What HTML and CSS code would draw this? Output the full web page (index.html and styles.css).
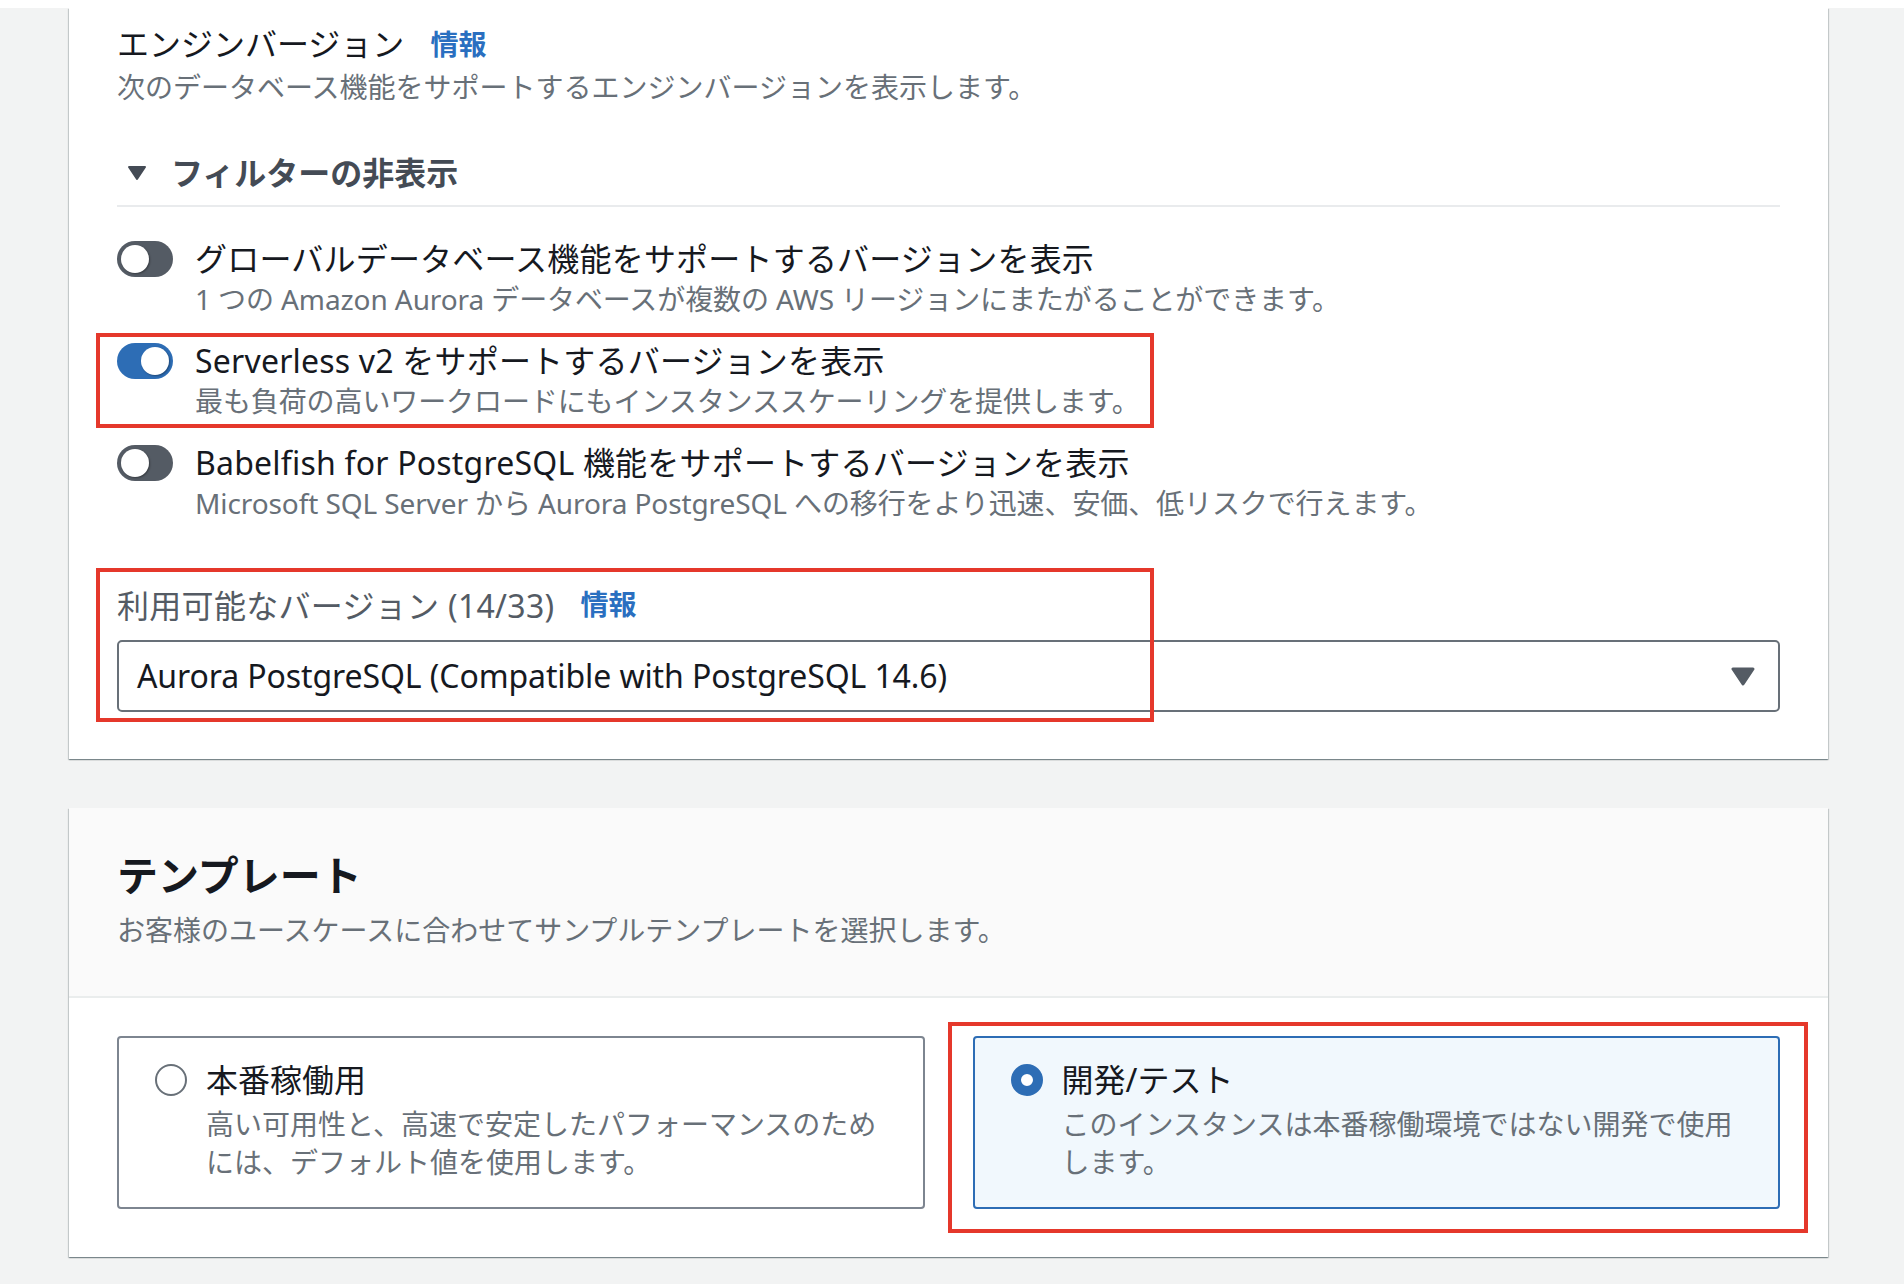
FILE: index.html
```html
<!DOCTYPE html>
<html lang="ja">
<head>
<meta charset="utf-8">
<title>エンジンバージョン</title>
<link rel="stylesheet" href="styles.css">
</head>
<body>
<div class="page">
  <section class="card card-engine">
    <div class="field-head">
      <span class="title">エンジンバージョン</span>
      <a class="info">情報</a>
    </div>
    <p class="desc">次のデータベース機能をサポートするエンジンバージョンを表示します。</p>

    <div class="expander">
      <svg class="caret" width="20" height="16" viewBox="0 0 20 16"><polygon points="2,2 18,2 10,14" fill="#444b55" stroke="#444b55" stroke-width="2" stroke-linejoin="round"/></svg>
      <span>フィルターの非表示</span>
    </div>
    <div class="divider"></div>

    <div class="toggles">
      <div class="toggle-row">
        <span class="toggle"></span>
        <div class="toggle-text">
          <div class="t-label">グローバルデータベース機能をサポートするバージョンを表示</div>
          <div class="t-desc">1 つの Amazon Aurora データベースが複数の AWS リージョンにまたがることができます。</div>
        </div>
      </div>
      <div class="toggle-row">
        <span class="toggle on"></span>
        <div class="toggle-text">
          <div class="t-label">Serverless v2 をサポートするバージョンを表示</div>
          <div class="t-desc">最も負荷の高いワークロードにもインスタンススケーリングを提供します。</div>
        </div>
      </div>
      <div class="toggle-row">
        <span class="toggle"></span>
        <div class="toggle-text">
          <div class="t-label">Babelfish for PostgreSQL 機能をサポートするバージョンを表示</div>
          <div class="t-desc">Microsoft SQL Server から Aurora PostgreSQL への移行をより迅速、安価、低リスクで行えます。</div>
        </div>
      </div>
    </div>

    <div class="version-label">
      <span>利用可能なバージョン (14/33)</span>
      <a class="info">情報</a>
    </div>
    <div class="select">
      <span class="select-value">Aurora PostgreSQL (Compatible with PostgreSQL 14.6)</span>
      <svg class="select-arrow" width="24" height="19" viewBox="0 0 24 19"><polygon points="2,2 22,2 12,17" fill="#545b64" stroke="#545b64" stroke-width="3" stroke-linejoin="round"/></svg>
    </div>

    <div class="mark mark-serverless"></div>
    <div class="mark mark-version"></div>
  </section>

  <section class="card card-template">
    <div class="card-header">
      <h2 class="heading">テンプレート</h2>
      <p class="desc">お客様のユースケースに合わせてサンプルテンプレートを選択します。</p>
    </div>
    <div class="card-body">
      <div class="tiles">
        <div class="tile">
          <span class="radio"></span>
          <div class="tile-text">
            <div class="tile-label">本番稼働用</div>
            <div class="tile-desc">高い可用性と、高速で安定したパフォーマンスのためには、デフォルト値を使用します。</div>
          </div>
        </div>
        <div class="tile selected">
          <span class="radio checked"></span>
          <div class="tile-text">
            <div class="tile-label">開発/テスト</div>
            <div class="tile-desc">このインスタンスは本番稼働環境ではない開発で使用します。</div>
          </div>
        </div>
      </div>
    </div>
    <div class="mark mark-devtest"></div>
  </section>
</div>
</body>
</html>
```

FILE: styles.css
```css
* { box-sizing: border-box; }

html, body {
  margin: 0;
  padding: 0;
  background: #ffffff;
}

body {
  font-family: "Noto Sans", "Noto Sans CJK JP", sans-serif;
  color: #16191f;
}

.page {
  margin-top: 8px;
  background: #f2f3f3;
  padding: 0 76px 27px 69px;
  min-height: 1276px;
}

.card {
  position: relative;
  background: #ffffff;
  box-shadow: 0 1px 1px 0 rgba(0, 28, 36, 0.3),
              1px 1px 1px 0 rgba(0, 28, 36, 0.15),
              -1px 1px 1px 0 rgba(0, 28, 36, 0.15);
}

/* ---------- engine card ---------- */
.card-engine {
  padding: 14px 48px 47px 48px;
}

.field-head {
  display: flex;
  align-items: center;
  height: 44px;
}

.title {
  font-size: 32px;
  line-height: 44px;
  color: #16191f;
}

.info {
  font-size: 28px;
  font-weight: 700;
  color: #2a6fc0;
  margin-left: 26px;
  line-height: 44px;
  text-decoration: none;
}

.desc {
  margin: 1px 0 0 0;
  font-size: 28px;
  line-height: 40px;
  color: #687078;
}

.expander {
  display: flex;
  align-items: center;
  margin-top: 42px;
  height: 44px;
  font-size: 32px;
  font-weight: 700;
  color: #444b55;
}

.caret {
  margin-left: 10px;
  margin-right: 24px;
  margin-top: 4px;
}

.divider {
  margin-top: 12px;
  height: 2px;
  background: #e9ebed;
}

.toggles {
  margin-top: 30px;
  display: flex;
  flex-direction: column;
  gap: 22px;
}

.toggle-row {
  display: flex;
  align-items: flex-start;
  gap: 22px;
}

.toggle {
  position: relative;
  flex: none;
  width: 56px;
  height: 36px;
  margin-top: 4px;
  border-radius: 18px;
  background: #545b64;
}

.toggle::after {
  content: "";
  position: absolute;
  top: 4px;
  left: 4px;
  width: 28px;
  height: 28px;
  border-radius: 50%;
  background: #ffffff;
  box-shadow: 1px 1px 2px rgba(0, 0, 0, 0.35);
}

.toggle.on {
  background: #2d6db5;
}

.toggle.on::after {
  left: 24px;
}

.t-label {
  font-size: 32px;
  line-height: 44px;
  color: #16191f;
  letter-spacing: 0.2px;
}

.t-desc {
  font-size: 28px;
  line-height: 36px;
  color: #687078;
  letter-spacing: -0.1px;
}

.version-label {
  margin-top: 61px;
  display: flex;
  align-items: center;
  height: 44px;
  font-size: 32px;
  color: #545b64;
  letter-spacing: 0.3px;
}

.version-label .info {
  letter-spacing: 0;
}

.select {
  margin-top: 14px;
  height: 72px;
  border: 2px solid #687078;
  border-radius: 5px;
  display: flex;
  align-items: center;
  justify-content: space-between;
  padding: 0 23px 0 18px;
}

.select-value {
  font-size: 32px;
  line-height: 44px;
  color: #16191f;
  letter-spacing: -0.1px;
}

/* ---------- annotation marks ---------- */
.mark {
  position: absolute;
  border: 4px solid #e5382b;
  pointer-events: none;
}

.mark-serverless {
  left: 27px;
  top: 325px;
  width: 1058px;
  height: 95px;
}

.mark-version {
  left: 27px;
  top: 560px;
  width: 1058px;
  height: 154px;
}

.mark-devtest {
  left: 879px;
  top: 214px;
  width: 860px;
  height: 211px;
}

/* ---------- template card ---------- */
.card-template {
  margin-top: 49px;
}

.card-header {
  background: #fafafa;
  padding: 41px 48px 46px 48px;
  border-bottom: 2px solid #eaeded;
}

.heading {
  margin: 0;
  font-size: 41px;
  line-height: 52px;
  font-weight: 700;
  color: #16191f;
}

.card-header .desc {
  margin-top: 9px;
}

.card-body {
  padding: 38px 48px 48px 48px;
}

.tiles {
  display: grid;
  grid-template-columns: 1fr 1fr;
  gap: 48px;
}

.tile {
  display: flex;
  align-items: flex-start;
  gap: 19px;
  border: 2px solid #7d8590;
  border-radius: 4px;
  padding: 20px 36px 26px 36px;
  background: #ffffff;
}

.tile.selected {
  border-color: #2d6db5;
  background: #f1f8fd;
}

.radio {
  flex: none;
  width: 32px;
  height: 32px;
  margin-top: 6px;
  border-radius: 50%;
  border: 2px solid #687078;
  background: #ffffff;
}

.radio.checked {
  border: 10px solid #2d6db5;
}

.tile-label {
  font-size: 32px;
  line-height: 44px;
  color: #16191f;
}

.tile-desc {
  margin-top: 3px;
  font-size: 28px;
  line-height: 38px;
  color: #687078;
}
```
